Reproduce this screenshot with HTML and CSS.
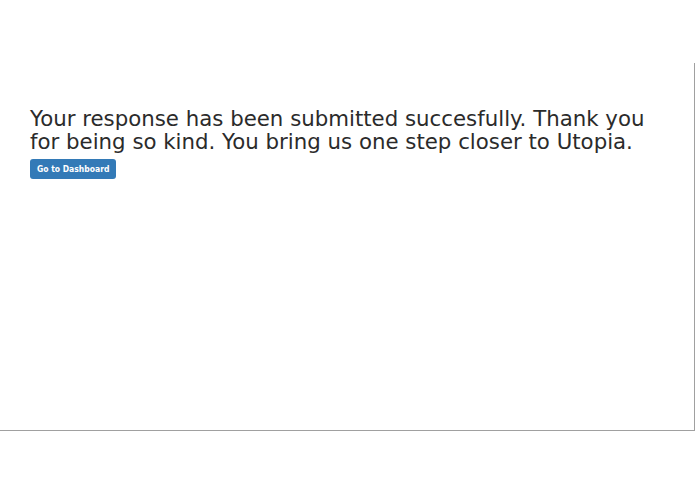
FILE: index.html
```html
<!DOCTYPE html>
<html>
<head>
<meta charset="utf-8">
<link rel="stylesheet" href="styles.css">
</head>
<body>
<div class="panel">
  <div class="content">
    <p class="message">Your response has been submitted succesfully. Thank you for being so kind. You bring us one step closer to Utopia.</p>
    <a class="btn" href="#">Go to Dashboard</a>
  </div>
</div>
</body>
</html>
```
FILE: styles.css
```css
html, body {
  margin: 0;
  padding: 0;
  background: #fff;
}
.panel {
  margin-top: 63px;
  width: 694px;
  height: 367px;
  border-right: 1px solid #a0a0a0;
  border-bottom: 1px solid #a0a0a0;
}
.content {
  padding: 44px 30px 0 30px;
}
.message {
  margin: 0 0 5px 0;
  font-family: "DejaVu Sans", sans-serif;
  font-size: 21.3px;
  line-height: 23px;
  color: #2b2b2b;
  max-width: 625px;
}
.btn {
  display: inline-block;
  background: #337ab7;
  color: #fff;
  font-family: "DejaVu Sans Condensed", "DejaVu Sans", sans-serif;
  font-stretch: condensed;
  font-size: 8.5px;
  font-weight: bold;
  line-height: 20px;
  height: 20px;
  padding: 0 7px;
  border-radius: 3px;
  text-decoration: none;
}
```
